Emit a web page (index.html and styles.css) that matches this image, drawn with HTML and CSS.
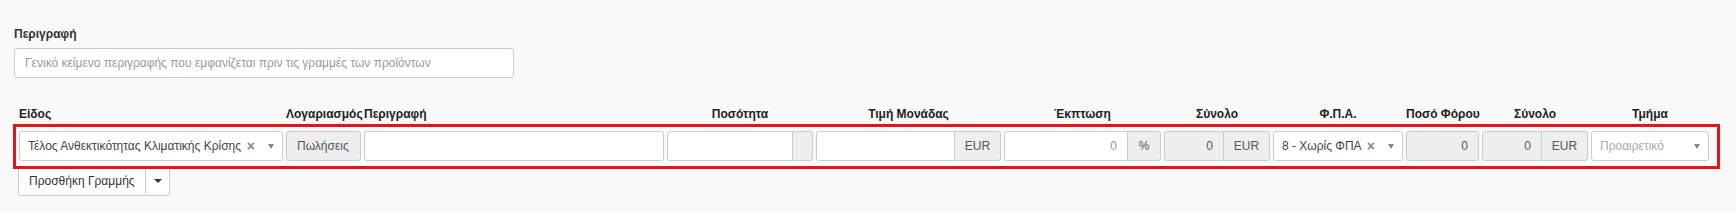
FILE: index.html
```html
<!DOCTYPE html>
<html lang="el">
<head>
<meta charset="utf-8">
<title>Γραμμές</title>
<link rel="stylesheet" href="styles.css">
</head>
<body>
<div class="page">
  <div class="field">
    <label class="field-label">Περιγραφή</label>
    <input class="control general" type="text" placeholder="Γενικό κείμενο περιγραφής που εμφανίζεται πριν τις γραμμές των προϊόντων">
  </div>

  <div class="lines">
    <div class="grid head">
      <div class="h left">Είδος</div>
      <div class="h left">Λογαριασμός</div>
      <div class="h left">Περιγραφή</div>
      <div class="h">Ποσότητα</div>
      <div class="h">Τιμή Μονάδας</div>
      <div class="h">Έκπτωση</div>
      <div class="h">Σύνολο</div>
      <div class="h">Φ.Π.Α.</div>
      <div class="h">Ποσό Φόρου</div>
      <div class="h">Σύνολο</div>
      <div class="h">Τμήμα</div>
    </div>

    <div class="grid row">
      <div class="select">
        <span class="sel-text">Τέλος Ανθεκτικότητας Κλιματικής Κρίσης</span>
        <span class="sel-clear">×</span>
        <span class="sel-arrow"></span>
      </div>
      <div class="control readonly">Πωλήσεις</div>
      <input class="control" type="text">
      <div class="group">
        <input class="control" type="text">
        <span class="addon narrow"></span>
      </div>
      <div class="group">
        <input class="control" type="text">
        <span class="addon">EUR</span>
      </div>
      <div class="group">
        <input class="control num" type="text" placeholder="0">
        <span class="addon pct">%</span>
      </div>
      <div class="group">
        <div class="control readonly num">0</div>
        <span class="addon">EUR</span>
      </div>
      <div class="select">
        <span class="sel-text">8 - Χωρίς ΦΠΑ</span>
        <span class="sel-clear">×</span>
        <span class="sel-arrow"></span>
      </div>
      <div class="control readonly num">0</div>
      <div class="group">
        <div class="control readonly num">0</div>
        <span class="addon">EUR</span>
      </div>
      <div class="select">
        <span class="sel-text placeholder">Προαιρετικό</span>
        <span class="sel-arrow"></span>
      </div>
    </div>

    <div class="highlight"></div>
  </div>

  <div class="btn-group">
    <button class="btn main" type="button">Προσθήκη Γραμμής</button>
    <button class="btn toggle" type="button"><span class="caret"></span></button>
  </div>
</div>
</body>
</html>
```

FILE: styles.css
```css
* { box-sizing: border-box; }

html, body {
  margin: 0;
  background: #f9f9f9;
}

body {
  font-family: "Liberation Sans", Arial, sans-serif;
  font-size: 12px;
  color: #333;
}

.page {
  padding: 26px 0 0 14px;
}

.field-label {
  display: block;
  font-weight: bold;
  line-height: 17px;
  color: #333;
}

.control {
  display: flex;
  align-items: center;
  height: 30px;
  padding: 0 10px;
  font-family: "Liberation Sans", Arial, sans-serif;
  font-size: 12px;
  color: #555;
  background: #fff;
  border: 1px solid #ccc;
  border-radius: 3px;
  outline: none;
  min-width: 0;
  width: 100%;
}

.control::placeholder { color: #999; }

.general {
  margin-top: 5px;
  width: 500px;
}

.lines {
  position: relative;
  margin-top: 28px;
  padding-left: 5px;
}

.grid {
  display: grid;
  grid-template-columns: 264px 75px 300px 146px 185px 157px 106px 130px 73px 106px 118px;
  column-gap: 3px;
}

.h {
  font-weight: bold;
  line-height: 17px;
  color: #222;
  text-align: center;
  white-space: nowrap;
}

.h.left { text-align: left; }

.row { margin-top: 8px; }

.readonly {
  background: #eee;
}

.num {
  justify-content: flex-end;
  text-align: right;
}

.group {
  display: flex;
  min-width: 0;
}

.group .control {
  flex: 1;
  border-top-right-radius: 0;
  border-bottom-right-radius: 0;
}

.addon {
  display: flex;
  align-items: center;
  justify-content: center;
  width: 46px;
  flex: none;
  height: 30px;
  font-size: 12px;
  color: #555;
  background: #eee;
  border: 1px solid #ccc;
  border-left: 0;
  border-radius: 0 3px 3px 0;
}

.addon.narrow { width: 20px; }
.addon.pct { width: 33px; }

.select {
  display: flex;
  align-items: center;
  height: 30px;
  padding: 0 8px 0 8px;
  background: #fff;
  border: 1px solid #ccc;
  border-radius: 3px;
  color: #444;
  min-width: 0;
}

.sel-text {
  flex: 1;
  white-space: nowrap;
  overflow: hidden;
  color: #444;
}

.sel-text.placeholder { color: #aaa; }

.sel-clear {
  font-weight: bold;
  font-size: 14px;
  color: #888;
  margin-right: 13px;
  line-height: 1;
}

.sel-arrow {
  width: 0;
  height: 0;
  border-left: 3.5px solid transparent;
  border-right: 3.5px solid transparent;
  border-top: 5px solid #888;
}

.highlight {
  position: absolute;
  left: -1px;
  top: 18px;
  width: 1707px;
  height: 45px;
  border: 3px solid #e3141b;
  pointer-events: none;
}

.btn-group {
  display: flex;
  margin-top: 5px;
  margin-left: 4px;
}

.btn {
  height: 30px;
  font-family: "Liberation Sans", Arial, sans-serif;
  font-size: 12px;
  color: #333;
  background: #fff;
  border: 1px solid #ccc;
  cursor: pointer;
}

.btn.main {
  width: 128px;
  padding: 0 10px;
  border-radius: 3px 0 0 3px;
  text-align: left;
}

.btn.toggle {
  width: 24px;
  padding: 0;
  border-left: 0;
  border-radius: 0 3px 3px 0;
  display: flex;
  align-items: center;
  justify-content: center;
}

.caret {
  width: 0;
  height: 0;
  border-left: 4px solid transparent;
  border-right: 4px solid transparent;
  border-top: 4px solid #333;
}
```
